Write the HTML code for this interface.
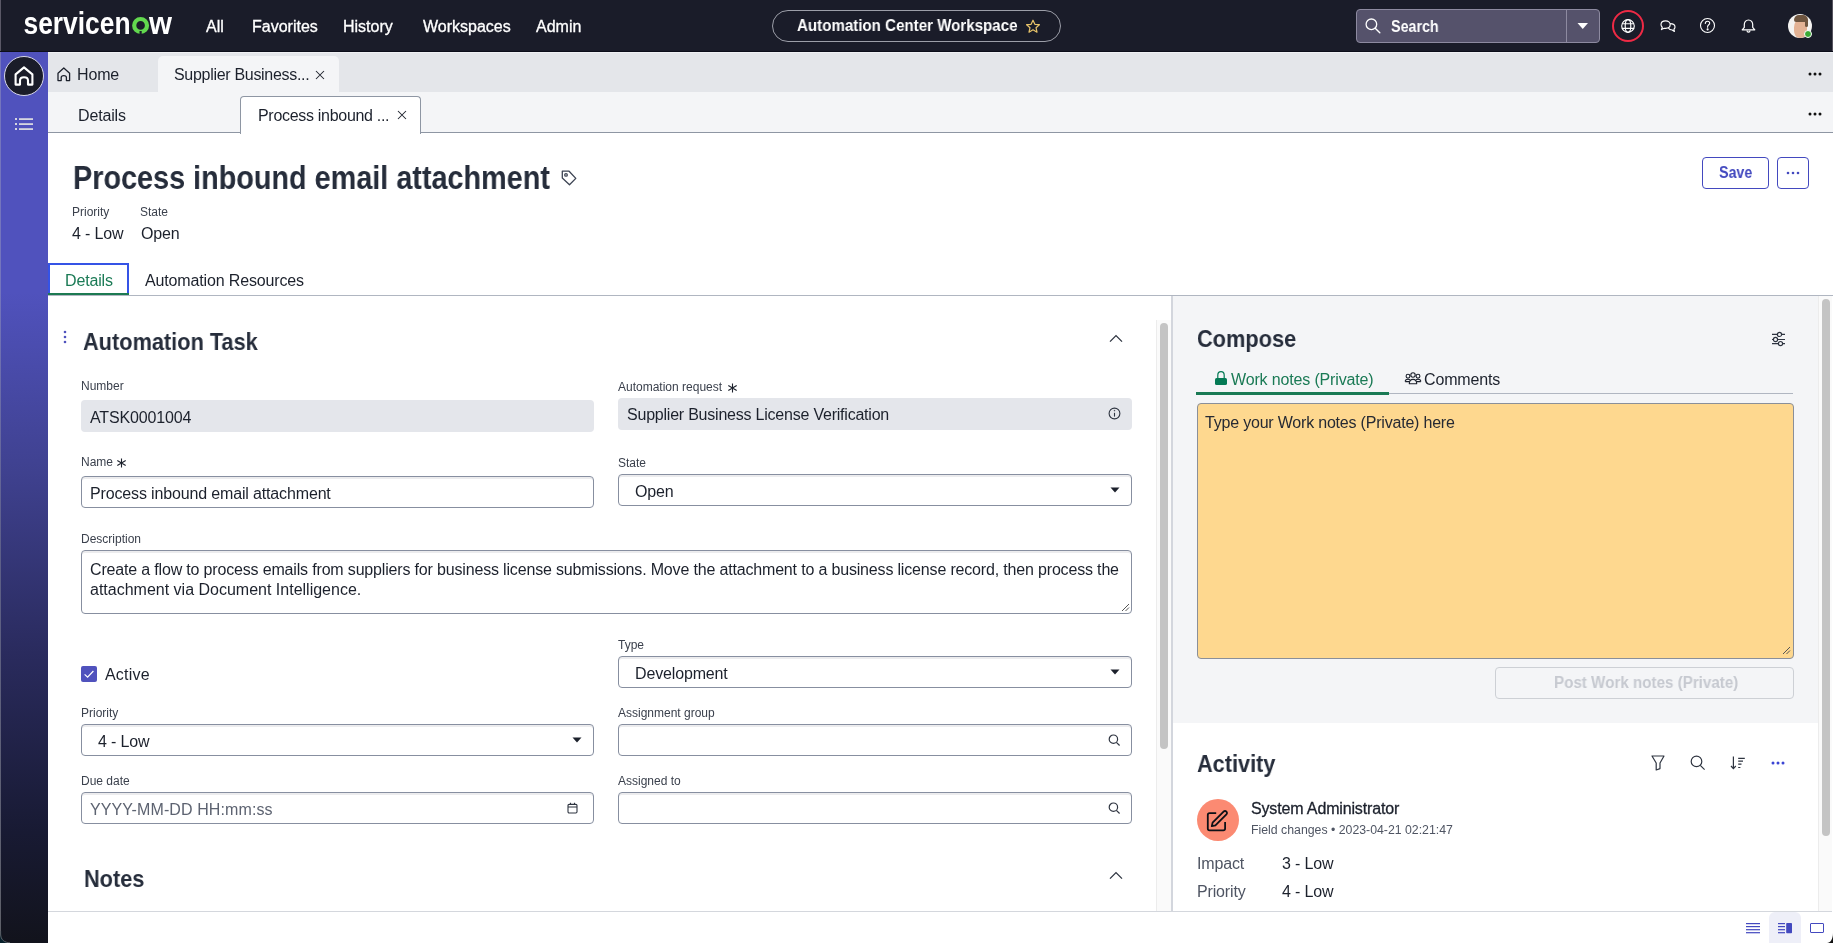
<!DOCTYPE html>
<html><head><meta charset="utf-8">
<style>
*{box-sizing:border-box;margin:0;padding:0}
html,body{width:1833px;height:943px;overflow:hidden;background:#fff;font-family:"Liberation Sans",sans-serif;color:#1c212c}
.a{position:absolute}
.t{position:absolute;white-space:nowrap;line-height:1}
.sx{transform-origin:0 0}
svg{position:absolute;overflow:visible}
.nav{color:#fff;font-size:16px;top:19px;-webkit-text-stroke:0.3px #fff}
.lbl{font-size:12px;color:#3b414d}
.v{font-size:16px;letter-spacing:-0.15px;color:#1c212c}
.inp{position:absolute;border:1px solid #878fa0;border-radius:4px;background:#fff;height:32px;box-shadow:inset 0 2px 0 #ececee}
.ro{position:absolute;background:#e4e6eb;border-radius:4px;height:32px}
.h2{font-size:24px;font-weight:bold;color:#262d3b}
.t{will-change:transform}
svg{will-change:transform}
</style></head><body>
<!-- backgrounds -->
<div class="a" style="left:0;top:0;width:1833px;height:52px;background:#1a1c29"></div>
<div class="a" style="left:0;top:52px;width:48px;height:891px;background:linear-gradient(to bottom,#5052bd 0px,#5052bd 240px,#3f418f 420px,#2a2b5e 600px,#181a33 780px,#12131c 891px)"></div>
<div class="a" style="left:0;top:52px;width:1px;height:880px;background:linear-gradient(to bottom,#7475bd 0,#7475bd 240px,#5d5f88 500px,#5e6068 880px)"></div>
<div class="a" style="left:48px;top:52px;width:1785px;height:40px;background:#e4e6ea"></div>
<div class="a" style="left:48px;top:92px;width:1785px;height:41px;background:#f4f5f7;border-bottom:1px solid #8e96a3"></div>

<!-- header -->
<svg style="left:0;top:0" width="200" height="52"><text x="23.5" y="34" font-family="Liberation Sans" font-weight="bold" font-size="31" fill="#fff" textLength="107" lengthAdjust="spacingAndGlyphs">servicen</text><circle cx="140.6" cy="25.4" r="6.4" fill="none" stroke="#62d84e" stroke-width="4.2"/><rect x="139.5" y="31" width="2.2" height="3.5" fill="#1a1c29"/><text x="149" y="34" font-family="Liberation Sans" font-weight="bold" font-size="31" fill="#fff" textLength="23" lengthAdjust="spacingAndGlyphs">w</text></svg>
<div class="t nav" style="left:206px">All</div>
<div class="t nav" style="left:252px">Favorites</div>
<div class="t nav" style="left:343px">History</div>
<div class="t nav" style="left:423px">Workspaces</div>
<div class="t nav" style="left:536px">Admin</div>
<div class="a" style="left:772px;top:10px;width:289px;height:32px;border:1px solid #9c9ea8;border-radius:16px"></div>
<div class="t sx" style="left:797px;top:18px;font-size:16px;font-weight:bold;color:#fff;transform:scaleX(.944)">Automation Center Workspace</div>
<svg style="left:1025px;top:19px" width="16" height="15" viewBox="0 0 16 15"><path d="M8 1.2 L9.9 5.3 L14.4 5.7 L11 8.7 L12 13.2 L8 10.8 L4 13.2 L5 8.7 L1.6 5.7 L6.1 5.3 Z" fill="none" stroke="#e9c46a" stroke-width="1.2" stroke-linejoin="round"/></svg>

<div class="a" style="left:1356px;top:9px;width:244px;height:34px;background:#55526b;border:1px solid #8d8aa0;border-radius:4px"></div>
<div class="a" style="left:1566px;top:10px;width:1px;height:32px;background:#8d8aa0"></div>
<svg style="left:1364px;top:18px" width="18" height="18" viewBox="0 0 18 18"><circle cx="7.4" cy="6.3" r="5.3" fill="none" stroke="#fff" stroke-width="1.3"/><path d="M11.2 10.2 L15.8 14.8" stroke="#fff" stroke-width="1.4" stroke-linecap="round"/></svg>
<div class="t sx" style="left:1391px;top:19px;font-size:16px;font-weight:bold;color:#fff;transform:scaleX(.894)">Search</div>
<svg style="left:1577px;top:22px" width="12" height="8"><path d="M0.5 1 H11 L5.75 7 Z" fill="#fff"/></svg>
<div class="a" style="left:1612px;top:10px;width:32px;height:32px;border:2px solid #ee2a45;border-radius:50%"></div>
<svg style="left:1620px;top:18px" width="16" height="16" viewBox="0 0 16 16" fill="none" stroke="#fff" stroke-width="1.15"><circle cx="8" cy="8" r="6.3"/><ellipse cx="8" cy="8" rx="2.8" ry="6.3"/><path d="M1.9 5.7 H14.1 M1.9 10.3 H14.1"/></svg>
<svg style="left:1660px;top:20px" width="16" height="13" viewBox="0 0 16 13" fill="none" stroke="#fff" stroke-width="1.15" stroke-linejoin="round"><path d="M5.6 0.8 C2.9 0.8 1 2.5 1 4.6 C1 5.7 1.5 6.6 2.3 7.3 L1.4 9.6 L4.2 8.3 C4.7 8.4 5.1 8.4 5.6 8.4 C8.3 8.4 10.2 6.7 10.2 4.6 C10.2 2.5 8.3 0.8 5.6 0.8 Z"/><path d="M8.4 7.9 C9.1 9.2 10.5 10 12.2 10 L14.4 11.4 L13.9 9.2 C14.6 8.6 15 7.8 15 6.9 C15 5.1 13.2 3.7 10.1 3.7"/></svg>
<svg style="left:1699px;top:17px" width="17" height="17" viewBox="0 0 17 17" fill="none" stroke="#fff" stroke-width="1.1"><circle cx="8.5" cy="8.5" r="7.0"/><path d="M6.3 6.4 C6.3 5 7.3 4.2 8.5 4.2 C9.7 4.2 10.7 5 10.7 6.2 C10.7 7.6 8.6 7.9 8.6 9.6 V10.2" stroke-linecap="round"/><circle cx="8.6" cy="12.4" r="0.5" fill="#fff"/></svg>
<svg style="left:1741px;top:19px" width="15" height="15" viewBox="0 0 15 15" fill="none" stroke="#fff" stroke-width="1.2" stroke-linejoin="round"><path d="M7.5 1 C4.8 1 3.3 3 3.3 5.6 V8.4 L1.2 10.8 H13.8 L11.7 8.4 V5.6 C11.7 3 10.2 1 7.5 1 Z"/><path d="M6 11.4 C6 12.5 6.6 13.1 7.5 13.1 C8.4 13.1 9 12.5 9 11.4"/></svg>
<div class="a" style="left:1788px;top:14px;width:24px;height:24px;border-radius:50%;background:#f4f3f1;overflow:hidden"><div class="a" style="left:6px;top:5px;width:13px;height:19px;background:#e3b294;border-radius:45% 45% 40% 40%"></div><div class="a" style="left:6px;top:1px;width:14px;height:7px;background:#6e553f;border-radius:7px 7px 2px 3px"></div><div class="a" style="left:17px;top:5px;width:3px;height:8px;background:#6e553f;border-radius:2px"></div></div>
<div class="a" style="left:1804px;top:30px;width:8px;height:8px;border-radius:50%;background:#3aa935;border:1px solid #fff"></div>
<div class="a" style="left:1832px;top:0;width:1px;height:52px;background:#56545f"></div><div class="a" style="left:0;top:0;width:1px;height:52px;background:#5a5866"></div><div class="a" style="left:0;top:51px;width:1833px;height:1px;background:#0c0e1a"></div><div class="a" style="left:48px;top:52px;width:1785px;height:1px;background:#f0f1f4"></div>

<!-- sidebar icons -->
<div class="a" style="left:4px;top:56px;width:40px;height:40px;border-radius:50%;background:#1a1c29;border:1px solid #d8d8e8"></div>
<svg style="left:14px;top:66px" width="20" height="20" viewBox="0 0 20 20" fill="none" stroke="#fff" stroke-width="2.1" stroke-linejoin="round"><path d="M1.6 18.6 V8.4 L10 1.4 L18.4 8.4 V18.6 H14 V14.6 C14 12.4 12.4 11.2 10 11.2 C7.6 11.2 6 12.4 6 14.6 V18.6 Z"/></svg>
<svg style="left:14px;top:117px" width="20" height="14" viewBox="0 0 20 14" fill="#d6d6e0"><rect x="1" y="1" width="2" height="2"/><rect x="1" y="6" width="2" height="2"/><rect x="1" y="11" width="2" height="2"/><rect x="5" y="1.2" width="14" height="1.8"/><rect x="5" y="6.2" width="14" height="1.8"/><rect x="5" y="11.2" width="14" height="1.8"/></svg>

<!-- tabs -->
<svg style="left:57px;top:67px" width="14" height="15" viewBox="0 0 14 15" fill="none" stroke="#1c212c" stroke-width="1.3" stroke-linejoin="round"><path d="M1 13.6 V6.2 L6.8 1 L12.6 6.2 V13.6 H9.4 V10.6 C9.4 9.3 8.4 8.6 6.8 8.6 C5.2 8.6 4.2 9.3 4.2 10.6 V13.6 Z"/></svg>
<div class="t v" style="left:77px;top:67px">Home</div>
<div class="a" style="left:158px;top:56px;width:181px;height:36px;background:#f4f5f7;border-radius:5px 5px 0 0"></div>
<div class="t v" style="left:174px;top:67px;letter-spacing:-0.3px">Supplier Business...</div>
<svg style="left:315px;top:70px" width="10" height="10" viewBox="0 0 10 10" stroke="#1c212c" stroke-width="1.05"><path d="M1 1 L9 9 M9 1 L1 9"/></svg>
<svg style="left:1808px;top:72px" width="14" height="4"><circle cx="2" cy="2" r="1.5" fill="#111"/><circle cx="7" cy="2" r="1.5" fill="#111"/><circle cx="12" cy="2" r="1.5" fill="#111"/></svg>
<div class="t v" style="left:78px;top:108px">Details</div>
<div class="a" style="left:240px;top:96px;width:181px;height:38px;background:#fff;border:1px solid #8e96a3;border-bottom:none;border-radius:4px 4px 0 0"></div>
<div class="t v" style="left:258px;top:108px;letter-spacing:-0.3px">Process inbound ...</div>
<svg style="left:397px;top:110px" width="10" height="10" viewBox="0 0 10 10" stroke="#1c212c" stroke-width="1.05"><path d="M1 1 L9 9 M9 1 L1 9"/></svg>
<svg style="left:1808px;top:112px" width="14" height="4"><circle cx="2" cy="2" r="1.5" fill="#111"/><circle cx="7" cy="2" r="1.5" fill="#111"/><circle cx="12" cy="2" r="1.5" fill="#111"/></svg>

<!-- title -->
<div class="t sx" style="left:73px;top:160px;font-size:34px;font-weight:bold;color:#262d3b;transform:scaleX(.847)">Process inbound email attachment</div>
<svg style="left:561px;top:169.7px" width="17" height="17" viewBox="0 0 17 17" fill="none" stroke="#3d4453" stroke-width="1.3" stroke-linejoin="round"><path d="M1.3 1.2 H8.1 L14.8 8.4 L8.5 14.7 L1.3 8.1 Z"/><circle cx="5" cy="4.9" r="1.3"/></svg>
<div class="t lbl" style="left:72px;top:206px">Priority</div>
<div class="t lbl" style="left:140px;top:206px">State</div>
<div class="t v" style="left:72px;top:226px">4 - Low</div>
<div class="t v" style="left:141px;top:226px">Open</div>
<div class="a" style="left:1702px;top:157px;width:67px;height:32px;border:1px solid #4349bf;border-radius:4px"></div>
<div class="t sx" style="left:1719px;top:165px;font-size:16px;font-weight:bold;color:#4349bf;transform:scaleX(.89)">Save</div>
<div class="a" style="left:1777px;top:157px;width:32px;height:32px;border:1px solid #4349bf;border-radius:4px"></div>
<svg style="left:1786px;top:171px" width="14" height="4"><circle cx="2" cy="2" r="1.3" fill="#4349bf"/><circle cx="7" cy="2" r="1.3" fill="#4349bf"/><circle cx="12" cy="2" r="1.3" fill="#4349bf"/></svg>

<!-- page tabs -->
<div class="a" style="left:48px;top:295px;width:1785px;height:1px;background:#b0b6c1"></div>
<div class="a" style="left:48px;top:263px;width:81px;height:32px;border:2px solid #3553e6;border-left-width:2px"></div>
<div class="a" style="left:48px;top:293px;width:81px;height:2px;background:#1d7a52"></div>
<div class="t v" style="left:65px;top:273px;color:#1a7a55">Details</div>
<div class="t v" style="left:145px;top:273px">Automation Resources</div>

<!-- left form -->
<svg style="left:62px;top:330px" width="6" height="14"><circle cx="3" cy="2" r="1.3" fill="#4f52bd"/><circle cx="3" cy="7" r="1.3" fill="#4f52bd"/><circle cx="3" cy="12" r="1.3" fill="#4f52bd"/></svg>
<div class="t h2 sx" style="left:83px;top:330px;transform:scaleX(.906)">Automation Task</div>
<svg style="left:1109px;top:334px" width="14" height="9" viewBox="0 0 14 9" fill="none" stroke="#2e3440" stroke-width="1.3"><path d="M1 7.6 L7 1.6 L13 7.6"/></svg>

<div class="t lbl" style="left:81px;top:380px">Number</div>
<div class="ro" style="left:81px;top:400px;width:513px"></div>
<div class="t v" style="left:90px;top:410px">ATSK0001004</div>

<div class="t lbl" style="left:618px;top:381px">Automation request</div>
<svg style="left:727px;top:383px" width="11" height="10" viewBox="0 0 11 10" stroke="#1c212c" stroke-width="1.1"><path d="M5.5 0.5 V9.5 M1.3 2.6 L9.7 7.4 M9.7 2.6 L1.3 7.4"/></svg>
<div class="ro" style="left:618px;top:398px;width:514px"></div>
<div class="t v" style="left:627px;top:407px;letter-spacing:-0.22px">Supplier Business License Verification</div>
<svg style="left:1108px;top:407px" width="13" height="13" viewBox="0 0 13 13" fill="none" stroke="#2e3440" stroke-width="1.1"><circle cx="6.5" cy="6.5" r="5.4"/><path d="M6.5 5.8 V9.6"/><circle cx="6.5" cy="3.7" r="0.35" fill="#2e3440" stroke-width="0.8"/></svg>

<div class="t lbl" style="left:81px;top:456px">Name</div>
<svg style="left:116px;top:458px" width="11" height="10" viewBox="0 0 11 10" stroke="#1c212c" stroke-width="1.1"><path d="M5.5 0.5 V9.5 M1.3 2.6 L9.7 7.4 M9.7 2.6 L1.3 7.4"/></svg>
<div class="inp" style="left:81px;top:476px;width:513px"></div>
<div class="t v" style="left:90px;top:486px">Process inbound email attachment</div>

<div class="t lbl" style="left:618px;top:457px">State</div>
<div class="inp" style="left:618px;top:474px;width:514px"></div>
<div class="t v" style="left:635px;top:484px">Open</div>
<svg style="left:1110px;top:487px" width="10" height="6"><path d="M0.5 0.5 H9.5 L5 5.5 Z" fill="#1c212c"/></svg>

<div class="t lbl" style="left:81px;top:533px">Description</div>
<div class="inp" style="left:81px;top:550px;width:1051px;height:64px"></div>
<div class="t v" style="left:90px;top:562px;letter-spacing:-0.17px">Create a flow to process emails from suppliers for business license submissions. Move the attachment to a business license record, then process the</div>
<div class="t v" style="left:90px;top:582px;letter-spacing:0px">attachment via Document Intelligence.</div>
<svg style="left:1121px;top:603px" width="9" height="9" stroke="#555" stroke-width="1"><path d="M1 8 L8 1 M4.5 8 L8 4.5"/></svg>

<div class="a" style="left:81px;top:666px;width:16px;height:16px;background:#5052bd;border-radius:2px"></div>
<svg style="left:81px;top:666px" width="16" height="16" viewBox="0 0 16 16" fill="none" stroke="#fff" stroke-width="1.2"><path d="M3.6 8.4 L6.6 11.2 L12.4 5"/></svg>
<div class="t v" style="left:105px;top:667px;letter-spacing:0.2px">Active</div>

<div class="t lbl" style="left:618px;top:639px">Type</div>
<div class="inp" style="left:618px;top:656px;width:514px"></div>
<div class="t v" style="left:635px;top:666px">Development</div>
<svg style="left:1110px;top:669px" width="10" height="6"><path d="M0.5 0.5 H9.5 L5 5.5 Z" fill="#1c212c"/></svg>

<div class="t lbl" style="left:81px;top:707px">Priority</div>
<div class="inp" style="left:81px;top:724px;width:513px"></div>
<div class="t v" style="left:98px;top:734px">4 - Low</div>
<svg style="left:572px;top:737px" width="10" height="6"><path d="M0.5 0.5 H9.5 L5 5.5 Z" fill="#1c212c"/></svg>

<div class="t lbl" style="left:618px;top:707px">Assignment group</div>
<div class="inp" style="left:618px;top:724px;width:514px"></div>
<svg style="left:1107px;top:733px" width="14" height="14" viewBox="0 0 14 14" fill="none" stroke="#2e3440" stroke-width="1.2"><circle cx="6.4" cy="6.2" r="4.2"/><path d="M9.4 9.3 L12.6 12.5"/></svg>

<div class="t lbl" style="left:81px;top:775px">Due date</div>
<div class="inp" style="left:81px;top:792px;width:513px"></div>
<div class="t v" style="left:90px;top:802px;color:#5d6371;letter-spacing:0.1px">YYYY-MM-DD HH:mm:ss</div>
<svg style="left:567px;top:802px" width="11" height="12" viewBox="0 0 11 12" fill="none" stroke="#2e3440" stroke-width="1.1"><rect x="1" y="2.4" width="9" height="8.6" rx="1.2"/><path d="M1 5 H10 M3.5 0.8 V3 M7.5 0.8 V3"/></svg>

<div class="t lbl" style="left:618px;top:775px">Assigned to</div>
<div class="inp" style="left:618px;top:792px;width:514px"></div>
<svg style="left:1107px;top:801px" width="14" height="14" viewBox="0 0 14 14" fill="none" stroke="#2e3440" stroke-width="1.2"><circle cx="6.4" cy="6.2" r="4.2"/><path d="M9.4 9.3 L12.6 12.5"/></svg>

<div class="t h2 sx" style="left:84px;top:867px;transform:scaleX(.906)">Notes</div>
<svg style="left:1109px;top:871px" width="14" height="9" viewBox="0 0 14 9" fill="none" stroke="#2e3440" stroke-width="1.3"><path d="M1 7.6 L7 1.6 L13 7.6"/></svg>

<!-- left scrollbar + divider -->
<div class="a" style="left:1156px;top:320px;width:15px;height:591px;background:#fafafa;border-left:1px solid #ececec"></div>
<div class="a" style="left:1160px;top:323px;width:8px;height:426px;background:#c4c4c4;border-radius:4px"></div>
<div class="a" style="left:1171px;top:296px;width:2px;height:615px;background:#d3d6dd"></div>

<!-- right panel -->
<div class="a" style="left:1173px;top:296px;width:645px;height:427px;background:#f4f5f7"></div>
<div class="a" style="left:1818px;top:296px;width:14px;height:615px;background:#fafafa;border-left:1px solid #ececec"></div>
<div class="a" style="left:1822px;top:299px;width:8px;height:537px;background:#c4c4c4;border-radius:4px"></div>

<div class="t h2 sx" style="left:1197px;top:327px;transform:scaleX(.907)">Compose</div>
<svg style="left:1771px;top:331px" width="15" height="16" viewBox="0 0 15 16" fill="none" stroke="#2e3440" stroke-width="1.2"><path d="M1 3.4 H6.2 M10.8 3.4 H14 M1 8.5 H2.2 M6.8 8.5 H14 M1 12.6 H7.2 M11.8 12.6 H14"/><circle cx="8.5" cy="3.4" r="2.1"/><circle cx="4.5" cy="8.5" r="2.1"/><circle cx="9.5" cy="12.6" r="2.1"/></svg>
<div class="a" style="left:1196px;top:393px;width:597px;height:1px;background:#b0b6c1"></div>
<div class="a" style="left:1196px;top:392px;width:193px;height:3px;background:#1a7a55"></div>
<svg style="left:1214px;top:370px" width="14" height="16" viewBox="0 0 14 16"><path d="M3.8 8 V5.2 C3.8 3 5.2 1.6 7 1.6 C8.8 1.6 10.2 3 10.2 5.2 V8" fill="none" stroke="#047a55" stroke-width="1.2"/><rect x="1" y="8" width="12" height="7" rx="1.6" fill="#047a55"/></svg>
<div class="t v" style="left:1231px;top:372px;color:#1a7a55">Work notes (Private)</div>
<svg style="left:1404px;top:372px" width="18" height="13" viewBox="0 0 18 13" fill="none" stroke="#1c212c" stroke-width="1.1" stroke-linejoin="round"><circle cx="4" cy="4.2" r="1.9"/><circle cx="9" cy="3" r="2.2"/><circle cx="14" cy="4.2" r="1.9"/><path d="M1.2 9.6 C1.2 7.9 2.5 7.2 4 7.2 C4.8 7.2 5.5 7.4 6 7.8"/><path d="M16.8 9.6 C16.8 7.9 15.5 7.2 14 7.2 C13.2 7.2 12.5 7.4 12 7.8"/><path d="M1.2 9.6 H5.4 M12.6 9.6 H16.8"/><path d="M5.3 11.8 C5.3 9 6.9 7.4 9 7.4 C11.1 7.4 12.7 9 12.7 11.8 Z"/></svg>
<div class="t v" style="left:1424px;top:372px">Comments</div>
<div class="a" style="left:1197px;top:403px;width:597px;height:256px;background:#fed88f;border:1px solid #8a8f99;border-radius:4px"></div>
<div class="t v" style="left:1205px;top:415px;color:#262a33;letter-spacing:-0.2px">Type your Work notes (Private) here</div>
<svg style="left:1782px;top:646px" width="9" height="9" stroke="#555" stroke-width="1"><path d="M1 8 L8 1 M4.5 8 L8 4.5"/></svg>
<div class="a" style="left:1495px;top:667px;width:299px;height:32px;border:1px solid #cdd0d5;border-radius:4px"></div>
<div class="t sx" style="left:1554px;top:675px;font-size:16px;font-weight:bold;color:#c6c9d0;transform:scaleX(.948)">Post Work notes (Private)</div>

<div class="t h2 sx" style="left:1197px;top:752px;transform:scaleX(.905)">Activity</div>
<svg style="left:1651px;top:755px" width="15" height="16" viewBox="0 0 15 16" fill="none" stroke="#2e3440" stroke-width="1.2" stroke-linejoin="round"><path d="M1 1 H13 L9 8 V13.6 L5.2 15 V8 Z"/></svg>
<svg style="left:1690px;top:755px" width="16" height="16" viewBox="0 0 16 16" fill="none" stroke="#2e3440" stroke-width="1.2"><circle cx="6.5" cy="6.4" r="5.3"/><path d="M10.3 10.3 L14.6 14.6"/></svg>
<svg style="left:1730px;top:755px" width="16" height="16" viewBox="0 0 16 16" fill="none" stroke="#2e3440" stroke-width="1.2"><path d="M3.4 1.5 V13.4 M1 11 L3.4 13.6 L5.8 11 M8.2 3.4 H14.8 M8.2 6.2 H13 M8.2 9.2 H11.5 M8.2 12.5 H10.4"/></svg>
<svg style="left:1771px;top:761px" width="14" height="4"><circle cx="2" cy="2" r="1.5" fill="#3b45d4"/><circle cx="7" cy="2" r="1.5" fill="#3b45d4"/><circle cx="12" cy="2" r="1.5" fill="#3b45d4"/></svg>

<div class="a" style="left:1197px;top:799px;width:42px;height:42px;background:#fb8a72;border-radius:50%"></div>
<svg style="left:1206px;top:808px" width="24" height="24" viewBox="0 0 24 24" fill="none" stroke="#0e1117" stroke-width="1.8" stroke-linejoin="round"><path d="M10.2 5.2 H3.6 C2.5 5.2 1.8 5.9 1.8 7 V20.6 C1.8 21.7 2.5 22.4 3.6 22.4 H17.3 C18.4 22.4 19.1 21.7 19.1 20.6 V14"/><path d="M5.8 18.2 L6.6 14.6 L17.6 3.6 C18.4 2.8 19.6 2.8 20.4 3.6 C21.2 4.4 21.2 5.6 20.4 6.4 L9.4 17.4 Z"/></svg>
<div class="t v" style="left:1251px;top:801px;color:#1c212c;-webkit-text-stroke:0.3px #1c212c">System Administrator</div>
<div class="t" style="left:1251px;top:824px;font-size:12.3px;color:#4f5563">Field changes • 2023-04-21 02:21:47</div>
<div class="t v" style="left:1197px;top:856px;color:#4f5563">Impact</div>
<div class="t v" style="left:1282px;top:856px">3 - Low</div>
<div class="t v" style="left:1197px;top:884px;color:#4f5563">Priority</div>
<div class="t v" style="left:1282px;top:884px">4 - Low</div>

<!-- footer -->
<div class="a" style="left:48px;top:911px;width:1784px;height:1px;background:#d4d7dd"></div>
<div class="a" style="left:1769px;top:912px;width:32px;height:31px;background:#eeeff8;border-radius:6px 6px 0 0"></div>
<svg style="left:1746px;top:922px" width="14" height="12" fill="#4349bf"><rect x="0" y="1" width="14" height="1.2"/><rect x="0" y="4" width="14" height="1.2"/><rect x="0" y="7.1" width="14" height="1.2"/><rect x="0" y="10.1" width="14" height="1.2"/></svg>
<svg style="left:1778px;top:922px" width="15" height="12" fill="#4349bf"><rect x="0" y="1" width="7" height="1.2"/><rect x="0" y="4" width="7" height="1.2"/><rect x="0" y="7.1" width="7" height="1.2"/><rect x="0" y="10.1" width="7" height="1.2"/><rect x="8.2" y="1" width="5.8" height="10.3" rx="0.8"/></svg>
<div class="a" style="left:1810px;top:923px;width:14px;height:10px;border:1.2px solid #4349bf;border-radius:1px"></div>
<svg style="left:0;top:931px" width="12" height="12"><path d="M0 0 V12 H12 C5 12 1.2 8.5 1.2 3 V0 Z" fill="#07202b"/><path d="M0.6 0 V3 C0.6 8.8 4.5 11.6 10 11.8" fill="none" stroke="#5e6068" stroke-width="1"/></svg>
<svg style="left:1823px;top:933px" width="10" height="10"><path d="M10 0 C10 6 7.5 10 4 10 H10 Z" fill="#111"/></svg>
</body></html>
